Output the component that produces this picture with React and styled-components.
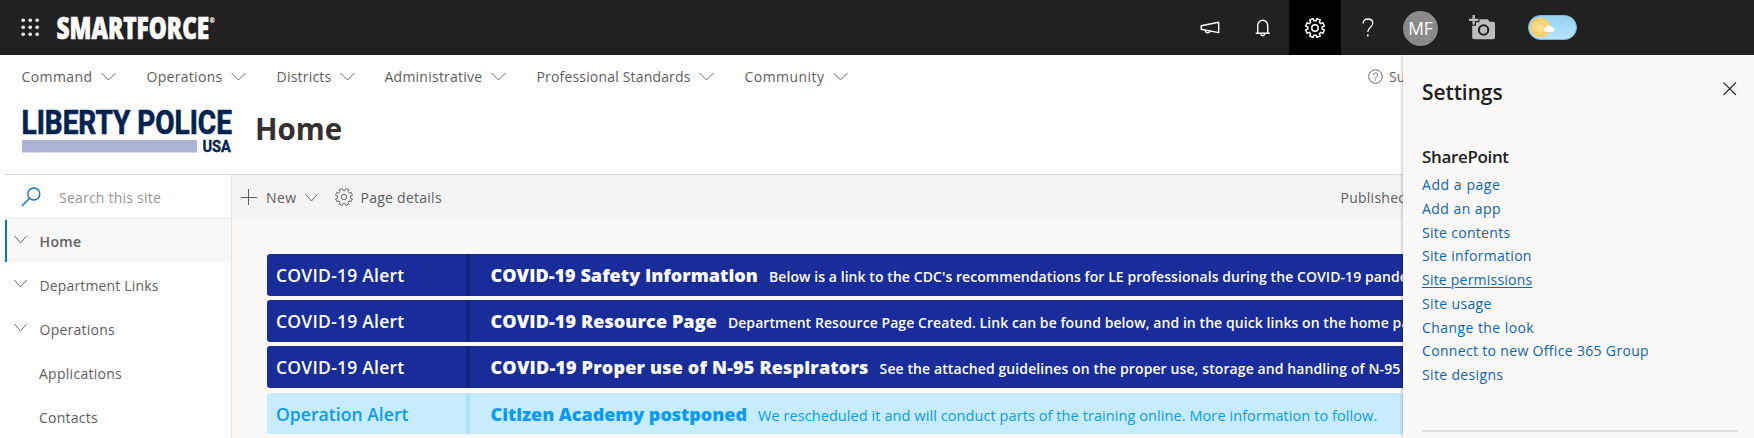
import React from "react";
import styled, { createGlobalStyle } from "styled-components";

const GlobalStyle = createGlobalStyle`
  *, *::before, *::after { box-sizing: border-box; }
  body { margin: 0; background: #fff; font-family: "Open Sans", "Noto Sans", sans-serif; font-size: 14px; color: #605e5c; }
  svg { display: block; flex: none; }
  h1, h2, h3 { margin: 0; }
`;

const Page = styled.div`
  position: relative;
  display: flex;
  flex-direction: column;
  width: 1754px;
  height: 438px;
  overflow: hidden;
  background: #fff;
  white-space: nowrap;
`;

/* Each label carries its own tracking */
const Label = styled.span`
  letter-spacing: ${(p) => p.$ls || 0}px;
`;

/* ---------- suite bar ---------- */
const SuiteBar = styled.header`
  display: flex;
  align-items: center;
  flex: none;
  height: 55px;
  padding-left: 21px;
  background: #212121;
  color: #fff;
`;
const SuiteLogo = styled.svg`
  margin-left: 16px;
  overflow: visible;
`;
const SuiteActions = styled.div`
  display: flex;
  align-items: center;
  height: 100%;
  margin-left: auto;
  margin-right: 177px;
`;
const SuiteButton = styled.button`
  display: flex;
  align-items: center;
  justify-content: center;
  width: 52px;
  height: 100%;
  padding: 0 ${(p) => p.$pr || 0}px 0 ${(p) => p.$pl || 0}px;
  border: 0;
  color: #fff;
  background: ${(p) => (p.$active ? "#000" : "transparent")};
`;
const Avatar = styled.div`
  width: 35px;
  height: 35px;
  margin: 2px 31px 0 10px;
  border-radius: 50%;
  background: #8a8a8a;
  font-size: 17.5px;
  line-height: 35px;
  text-align: center;
  letter-spacing: -0.2px;
`;
const WeatherToggle = styled.svg`
  margin-left: 33px;
`;

/* ---------- site header ---------- */
const SiteNav = styled.nav`
  display: flex;
  align-items: center;
  flex: none;
  height: 43px;
  padding-left: 21.5px;
`;
const NavItem = styled.a`
  display: flex;
  align-items: center;
  width: ${(p) => p.$w}px;
  gap: 8.5px;
`;
const Support = styled.a`
  display: flex;
  align-items: center;
  gap: 6px;
  margin-left: auto;
  width: 386px;
`;
const Brand = styled.div`
  display: flex;
  align-items: flex-start;
  flex: none;
  height: 76px;
  padding: 11px 0 0 21px;
`;
const BrandLogo = styled.svg`
  overflow: visible;
`;
const SiteTitle = styled.h1`
  margin: 0 0 0 20px;
  font-size: 29.5px;
  line-height: 40px;
  font-weight: 700;
  color: #323130;
`;

/* ---------- body ---------- */
const Body = styled.div`
  display: flex;
  flex: 1;
  min-height: 0;
  margin-left: 4px;
  border-top: 1px solid #d8d8d8;
`;
const Sidebar = styled.aside`
  width: 228px;
  flex: none;
  border-right: 1px solid #e6e6e6;
`;
const SearchBox = styled.div`
  display: flex;
  align-items: center;
  gap: 18px;
  height: 44px;
  padding: 1px 0 0 17px;
  border-bottom: 1px solid #eaeaea;
  color: #979593;
`;
const SideItem = styled.a`
  display: flex;
  align-items: center;
  height: 44px;
  padding-left: ${(p) => (p.$plain ? 35 : 10)}px;
  background: ${(p) => (p.$active ? "linear-gradient(#0078d4, #0078d4) 1px 1px / 2px 42px no-repeat, #f8f8f8" : "none")};
  font-weight: ${(p) => (p.$active ? 600 : 400)};
  svg { margin: -4px 12.5px 0 0; }
  span { margin-top: 1px; }
`;
const Main = styled.main`
  flex: 1;
  min-width: 0;
  background: #faf9f8;
`;
const CommandBar = styled.div`
  display: flex;
  align-items: center;
  height: 44px;
  padding-left: 9px;
  background: #f3f3f3;
`;
const Command = styled.button`
  display: flex;
  align-items: center;
  gap: ${(p) => p.$gap}px;
  margin-right: ${(p) => p.$mr || 0}px;
  padding: 0;
  border: 0;
  background: none;
  font: inherit;
  color: inherit;
`;
const Published = styled.span`
  margin-left: auto;
  width: 413.5px;
  letter-spacing: 0.25px;
`;
const Alerts = styled.div`
  display: flex;
  flex-direction: column;
  gap: 4px;
  padding: 35px 0 0 35px;
`;
const AlertRow = styled.article`
  display: flex;
  align-items: baseline;
  height: ${(p) => (p.$light ? 41 : 42)}px;
  margin-top: ${(p) => (p.$light ? 1 : 0)}px;
  border-radius: 3px 0 0 3px;
  line-height: 43px;
  overflow: hidden;
  color: ${(p) => (p.$light ? "#0a9bf5" : "#fff")};
  background: ${(p) => (p.$light ? "#c7ebff" : "#182d99")};
`;
const AlertKind = styled.div`
  width: 203px;
  flex: none;
  align-self: stretch;
  padding-left: 9px;
  border-right: 4px solid ${(p) => (p.$light ? "#b0e0ff" : "#15247f")};
  font-size: 17.5px;
  font-weight: 600;
`;
const AlertTitle = styled.h3`
  margin-left: 20.5px;
  font-size: 18px;
  font-weight: 800;
`;
const AlertText = styled.div`
  margin-left: 11px;
  font-size: ${(p) => (p.$light ? 14.5 : 14)}px;
  font-weight: ${(p) => (p.$light ? 400 : 600)};
`;

/* ---------- settings panel, lies over the page ---------- */
const Panel = styled.aside`
  position: absolute;
  top: 55px;
  right: 0;
  bottom: 0;
  width: 351px;
  padding: 20px 16px 0 19px;
  background: #faf9f8;
  box-shadow: -1px 0 3px rgba(0, 0, 0, 0.22);
  clip-path: inset(0 0 0 -10px);
`;
const PanelHead = styled.div`
  display: flex;
  justify-content: space-between;
  height: 69px;
  color: #201f1e;
`;
const PanelTitle = styled.h2`
  font-size: 21px;
  font-weight: 600;
  line-height: 35px;
  letter-spacing: -0.1px;
`;
const GroupTitle = styled.h3`
  font-size: 17px;
  line-height: 26px;
  font-weight: 600;
  letter-spacing: -0.35px;
  color: #201f1e;
`;
const LinkList = styled.div`
  display: flex;
  flex-direction: column;
  align-items: flex-start;
  padding: 3px 0 0;
`;
const PanelLink = styled.a`
  height: 23.75px;
  line-height: 23.75px;
  color: #0c64b4;
  text-decoration: ${(p) => (p.$underlined ? "underline" : "none")};
  text-underline-offset: 1.5px;
`;
const Divider = styled.div`
  height: 2px;
  margin-top: 43px;
  background: #e0dfdd;
`;

const Chevron = ({ w = 15 }) => (
  <svg width={w} height="9" viewBox={`0 0 ${w} 9`} fill="none" stroke="#6d6b69" strokeWidth="1">
    <path d={`M.5 1 L${w / 2} 8 L${w - 0.5} 1`} />
  </svg>
);

const gearPath = (() => {
  const pts = [];
  for (let i = 0; i < 8; i++) {
    const base = (i * Math.PI) / 4 + Math.PI / 8;
    [[-0.25, 6.5], [-0.19, 8.6], [0.19, 8.6], [0.25, 6.5]].forEach(([a, r]) => {
      pts.push(`${(9 + r * Math.cos(base + a)).toFixed(2)} ${(9 + r * Math.sin(base + a)).toFixed(2)}`);
    });
  }
  return `M${pts.join("L")}Z`;
})();
const Gear = ({ size = 18, weight = 1, r = 3 }) => (
  <svg width={size} height={size} viewBox="0 0 18 18" fill="none" stroke="currentColor" strokeWidth={weight} strokeLinejoin="round">
    <path d={gearPath} />
    <circle cx="9" cy="9" r={r} />
  </svg>
);

const nav = [
  ["Command", 0.42, 125],
  ["Operations", 0.3, 130],
  ["Districts", 0.22, 108],
  ["Administrative", 0.24, 152],
  ["Professional Standards", 0.17, 208],
  ["Community", 0.46, 110],
];
const side = [
  ["Home", 0.38],
  ["Department Links", 0.15],
  ["Operations", 0.25],
  ["Applications", 0.27],
  ["Contacts", 0.25],
];
const links = [
  ["Add a page", 0.56],
  ["Add an app", 0.45],
  ["Site contents", 0.3],
  ["Site information", 0.3],
  ["Site permissions", 0.22],
  ["Site usage", 0.35],
  ["Change the look", 0.43],
  ["Connect to new Office 365 Group", 0.33],
  ["Site designs", 0.35],
];
const alerts = [
  { kind: "COVID-19 Alert", kls: 0.24, title: "COVID-19 Safety Information", tls: 0.05, text: "Below is a link to the CDC's recommendations for LE professionals during the COVID-19 pandemic", ls: 0.07 },
  { kind: "COVID-19 Alert", kls: 0.24, title: "COVID-19 Resource Page", tls: 0.1, text: "Department Resource Page Created. Link can be found below, and in the quick links on the home page", ls: 0.07 },
  { kind: "COVID-19 Alert", kls: 0.24, title: "COVID-19 Proper use of N-95 Respirators", tls: 0.18, text: "See the attached guidelines on the proper use, storage and handling of N-95", ls: 0.1 },
  { kind: "Operation Alert", kls: 0.06, title: "Citizen Academy postponed", tls: -0.04, text: "We rescheduled it and will conduct parts of the training online. More information to follow.", ls: 0.08, light: true },
];

export default function App() {
  return (
    <>
      <GlobalStyle />
      <Page>
        <SuiteBar>
          <svg width="19" height="19" viewBox="0 0 19 19" fill="#fff">
            {[2.2, 9.2, 16.2].map((y) => [2.2, 9.2, 16.2].map((x) => <circle key={`${x}-${y}`} cx={x} cy={y} r="1.8" />))}
          </svg>
          <SuiteLogo width="160" height="40" viewBox="56 7 160 40" fill="#fff" fontFamily="Open Sans" fontWeight="800">
            <text transform="translate(56.5 37.5) scale(.642 1)" fontSize="29.5" textLength="238" lengthAdjust="spacingAndGlyphs" stroke="#fff" strokeWidth=".7">SMARTFORCE</text>
            <text x="209.5" y="21.5" fontSize="6.5">®</text>
          </SuiteLogo>
          <SuiteActions>
            <SuiteButton $pr={3}>
              <svg width="20" height="14" viewBox="0 0 20 14" fill="none" stroke="#fff" strokeWidth="1.4" strokeLinejoin="round">
                <path d="M1.2 4.7 L18.7 1.2 V11.6 L1.2 8.2Z" />
                <path d="M5.4 9.1 C5.6 12.5 9.4 12.8 10.2 10" />
              </svg>
            </SuiteButton>
            <SuiteButton $pr={1}>
              <svg width="16" height="18" viewBox="0 0 16 18" fill="none" stroke="#fff" strokeWidth="1.4">
                <path d="M2.7 14.3 V6.5 A5 5.3 0 0 1 12.7 6.5 V14.3 M.7 14.3 H14.8 M5.8 15 C6 17.3 9.4 17.3 9.6 15" />
              </svg>
            </SuiteButton>
            <SuiteButton $active>
              <Gear size={20} weight={1.35} r={2.9} />
            </SuiteButton>
            <SuiteButton $pl={1}>
              <svg width="12" height="19" viewBox="0 0 12 19" fill="none" stroke="#fff" strokeWidth="1.3">
                <path d="M1 5.6 C1 2.6 3 1 5.8 1 C8.8 1 10.8 2.8 10.8 5.2 C10.8 9.2 5.8 9.4 5.8 14" />
                <path d="M5.8 16.5 V18.4" strokeWidth="1.7" />
              </svg>
            </SuiteButton>
            <Avatar>MF</Avatar>
            <svg width="26" height="25" viewBox="0 0 26 25" fill="#bdbdbd">
              <path d="M3.5 0 H5.8 V3.7 H9.3 V6 H5.8 V9.5 H3.5 V6 H0 V3.7 H3.5Z" />
              <path d="M10.5 4.2 H18.8 L20.8 6.7 H24.2 Q26 6.7 26 8.5 V22.3 Q26 24.3 24 24.3 H5 Q3.2 24.3 3.2 22.3 V10.8 H7 V7.3 H10.5Z" />
              <circle cx="14.6" cy="15" r="4.7" fill="none" stroke="#212121" strokeWidth="2.1" />
            </svg>
            <WeatherToggle width="49" height="25" viewBox="0 0 49 25">
              <defs>
                <linearGradient id="sky" x1="0" y1="0" x2="0" y2="1">
                  <stop offset="0" stopColor="#96d2f2" />
                  <stop offset="1" stopColor="#b4e5fa" />
                </linearGradient>
                <radialGradient id="sun">
                  <stop offset="0" stopColor="#fde3a0" />
                  <stop offset="1" stopColor="#fbcb62" />
                </radialGradient>
              </defs>
              <rect x=".5" y=".5" width="48" height="24" rx="12" fill="url(#sky)" stroke="#7fb4cc" />
              <circle cx="12.5" cy="12.5" r="10" fill="url(#sun)" />
              <path d="M17.5 17 a2.4 2.4 0 0 1 0-4.4 a3.4 3.4 0 0 1 6.2-.6 a2.6 2.6 0 0 1 1.2 5Z" fill="#fff" />
            </WeatherToggle>
          </SuiteActions>
        </SuiteBar>

        <SiteNav>
          {nav.map(([text, ls, w]) => (
            <NavItem key={text} $w={w}>
              <Label $ls={ls}>{text}</Label>
              <Chevron />
            </NavItem>
          ))}
          <Support>
            <svg width="15" height="15" viewBox="0 0 15 15" fill="none" stroke="#6d6b69" strokeWidth="1">
              <circle cx="7.5" cy="7.5" r="6.8" />
              <path d="M5.5 6 C5.5 3.2 9.6 3.3 9.6 5.7 C9.6 7.4 7.5 7.3 7.5 9.2 M7.5 10.3 V11.5" />
            </svg>
            <Label>Support</Label>
          </Support>
        </SiteNav>

        <Brand>
          <BrandLogo width="214" height="50" viewBox="21 109 214 50" fill="#00234f" fontFamily="Roboto" fontWeight="700" stroke="#00234f">
            <text transform="translate(21.5 134) scale(.8 1)" fontSize="32.5" strokeWidth=".7" textLength="263" lengthAdjust="spacingAndGlyphs">LIBERTY POLICE</text>
            <rect x="22" y="140" width="175" height="12.5" fill="#abb4d6" stroke="none" />
            <text transform="translate(202.5 152) scale(.8 1)" fontSize="17.2" strokeWidth=".4" textLength="35.5" lengthAdjust="spacingAndGlyphs">USA</text>
          </BrandLogo>
          <SiteTitle>Home</SiteTitle>
        </Brand>

        <Body>
          <Sidebar>
            <SearchBox>
              <svg width="20" height="20" viewBox="0 0 20 20" fill="none" stroke="#106ebe" strokeWidth="1.3">
                <circle cx="12.8" cy="7" r="6" />
                <path d="M8.5 11.3 L1 19" />
              </svg>
              <Label $ls={0.22}>Search this site</Label>
            </SearchBox>
            {side.map(([text, ls], i) => (
              <SideItem key={text} $active={i === 0} $plain={i > 2}>
                {i < 3 && <Chevron w={13} />}
                <Label $ls={ls}>{text}</Label>
              </SideItem>
            ))}
          </Sidebar>
          <Main>
            <CommandBar>
              <Command $mr={17} $gap={9}>
                <svg width="16" height="16" viewBox="0 0 16 16" stroke="#605e5c" strokeWidth="1">
                  <path d="M0 8.5 H16 M7.5 0 V16" />
                </svg>
                <Label $ls={0.4}>New</Label>
                <Chevron w={13} />
              </Command>
              <Command $gap={7}>
                <Gear size={18} weight={0.9} r={2.7} />
                <Label $ls={0.26}>Page details</Label>
              </Command>
              <Published>Published</Published>
            </CommandBar>
            <Alerts>
              {alerts.map((a) => (
                <AlertRow key={a.title} $light={a.light}>
                  <AlertKind $light={a.light}>
                    <Label $ls={a.kls}>{a.kind}</Label>
                  </AlertKind>
                  <AlertTitle>
                    <Label $ls={a.tls}>{a.title}</Label>
                  </AlertTitle>
                  <AlertText $light={a.light}>
                    <Label $ls={a.ls}>{a.text}</Label>
                  </AlertText>
                </AlertRow>
              ))}
            </Alerts>
          </Main>
        </Body>

        <Panel>
          <PanelHead>
            <PanelTitle>Settings</PanelTitle>
            <svg width="16" height="27" viewBox="0 0 16 27" stroke="#323130" strokeWidth="1.2">
              <path d="M1.5 7.5 L14 20 M14 7.5 L1.5 20" />
            </svg>
          </PanelHead>
          <GroupTitle>SharePoint</GroupTitle>
          <LinkList>
            {links.map(([text, ls]) => (
              <PanelLink key={text} $underlined={text === "Site permissions"}>
                <Label $ls={ls}>{text}</Label>
              </PanelLink>
            ))}
          </LinkList>
          <Divider />
        </Panel>
      </Page>
    </>
  );
}
